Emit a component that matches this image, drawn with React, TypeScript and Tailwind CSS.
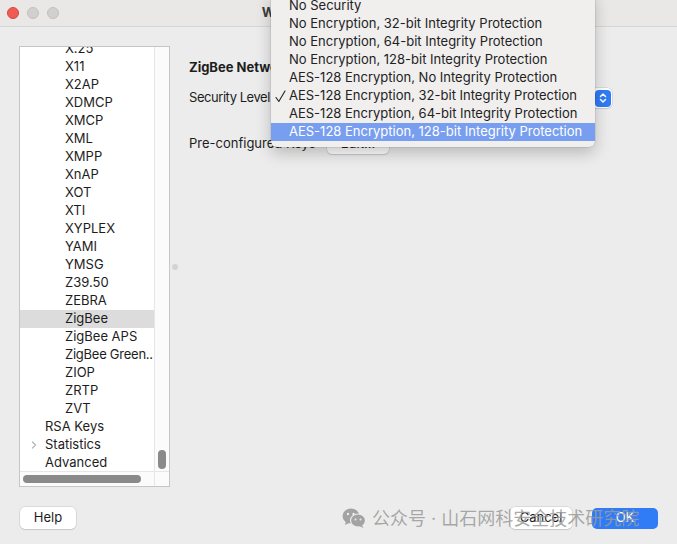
import React from "react";

const items: { t: string; lvl: number; sel?: boolean; chev?: boolean }[] = [
  { t: "X.25", lvl: 2 },
  { t: "X11", lvl: 2 },
  { t: "X2AP", lvl: 2 },
  { t: "XDMCP", lvl: 2 },
  { t: "XMCP", lvl: 2 },
  { t: "XML", lvl: 2 },
  { t: "XMPP", lvl: 2 },
  { t: "XnAP", lvl: 2 },
  { t: "XOT", lvl: 2 },
  { t: "XTI", lvl: 2 },
  { t: "XYPLEX", lvl: 2 },
  { t: "YAMI", lvl: 2 },
  { t: "YMSG", lvl: 2 },
  { t: "Z39.50", lvl: 2 },
  { t: "ZEBRA", lvl: 2 },
  { t: "ZigBee", lvl: 2, sel: true },
  { t: "ZigBee APS", lvl: 2 },
  { t: "ZigBee Green..", lvl: 2 },
  { t: "ZIOP", lvl: 2 },
  { t: "ZRTP", lvl: 2 },
  { t: "ZVT", lvl: 2 },
  { t: "RSA Keys", lvl: 1 },
  { t: "Statistics", lvl: 1, chev: true },
  { t: "Advanced", lvl: 1 },
];

const menu = [
  "No Security",
  "No Encryption, 32-bit Integrity Protection",
  "No Encryption, 64-bit Integrity Protection",
  "No Encryption, 128-bit Integrity Protection",
  "AES-128 Encryption, No Integrity Protection",
  "AES-128 Encryption, 32-bit Integrity Protection",
  "AES-128 Encryption, 64-bit Integrity Protection",
  "AES-128 Encryption, 128-bit Integrity Protection",
];

export default function App() {
  return (
    <div
      className="relative w-[677px] h-[544px] overflow-hidden bg-[#ececec] text-[13px] text-[#1d1d1d]"
      style={{ fontFamily: "Inter, 'Noto Sans CJK SC', sans-serif" }}
    >
      {/* Title bar */}
      <div className="relative h-[27px] border-b border-[#d6d6d6] bg-[#e9e8e7] flex items-center pl-[7px] gap-[8px]">
        <div className="w-[12px] h-[12px] rounded-full bg-[#ee5c55] border border-[#d8473f]" />
        <div className="w-[12px] h-[12px] rounded-full bg-[#d1d0cf] border border-[#c2c1c0]" />
        <div className="w-[12px] h-[12px] rounded-full bg-[#d1d0cf] border border-[#c2c1c0]" />
        <div className="absolute inset-0 flex items-center justify-center font-bold text-[13px] text-[#3a3a3a]">
          Wireshark · Preferences
        </div>
      </div>

      {/* Body */}
      <div className="flex pt-[19px] pl-[19px]">
        {/* Tree box */}
        <div className="relative w-[151px] h-[441px] bg-white border border-[#c6c6c6] flex flex-col">
          <div className="flex flex-1 min-h-0">
            <div className="flex-1 overflow-hidden">
              <div className="-mt-[7px]">
                {items.map((it) => (
                  <div
                    key={it.t}
                    className={`relative h-[18px] flex items-center whitespace-nowrap ${
                      it.sel ? "bg-[#dcdcdc]" : ""
                    } ${it.lvl === 2 ? "pl-[45px]" : "pl-[25px]"} ${
                      it.t === "ZigBee Green.." ? "tracking-[-0.25px]" : ""
                    }`}
                  >
                    {it.chev && (
                      <svg className="absolute left-[11px] top-[5px]" width="6" height="8" viewBox="0 0 6 8" fill="none" stroke="#b5b5b5" strokeWidth="1.2" strokeLinecap="round" strokeLinejoin="round">
                        <path d="M1.5 1 L4.5 4 L1.5 7" />
                      </svg>
                    )}
                    {it.t}
                  </div>
                ))}
              </div>
            </div>
            <div className="relative w-[15px] border-l border-[#e6e6e6] bg-[#fbfbfb]">
              <div className="absolute left-[3px] bottom-[2px] w-[8px] h-[19px] rounded-full bg-[#8a8a8a]" />
            </div>
          </div>
          <div className="flex h-[15px] border-t border-[#e6e6e6] bg-[#fbfbfb]">
            <div className="flex-1 flex items-center pl-[3px]">
              <div className="w-[118px] h-[8px] rounded-full bg-[#8a8a8a]" />
            </div>
            <div className="w-[15px] border-l border-[#e6e6e6]" />
          </div>
        </div>

        {/* splitter */}
        <div className="w-[19px] flex items-center pl-[2px]">
          <div className="w-[6px] h-[6px] rounded-full bg-[#d3d3d3]" />
        </div>

        {/* Right panel */}
        <div className="flex flex-col pt-[13px]">
          <div className="font-bold h-[18px] flex items-center">ZigBee Network Layer</div>
          <div className="flex items-center mt-[10px] h-[22px]">
            <span className="tracking-[-0.45px]">Security Level</span>
            <div className="ml-[6px] w-[336px] h-[20px] rounded-[5px] bg-white shadow-[0_0_0_0.5px_#c8c8c8,0_1px_1px_rgba(0,0,0,0.12)] flex items-center justify-end pr-[1px]">
              <div className="w-[16px] h-[17px] rounded-[4px] bg-[#2f7cf6] flex items-center justify-center">
                <svg width="8" height="12" viewBox="0 0 8 12" fill="none" stroke="white" strokeWidth="1.5" strokeLinecap="round" strokeLinejoin="round">
                  <path d="M1.5 4.5 L4 2 L6.5 4.5" />
                  <path d="M1.5 7.5 L4 10 L6.5 7.5" />
                </svg>
              </div>
            </div>
          </div>
          <div className="flex items-center mt-[25px] h-[20px]">
            <span className="w-[138px]">Pre-configured Keys</span>
            <div className="w-[62px] h-[20px] rounded-[5px] bg-white shadow-[0_0_0_0.5px_#c8c8c8,0_1px_1px_rgba(0,0,0,0.15)] flex items-center justify-center">
              Edit...
            </div>
          </div>
        </div>
      </div>

      {/* Bottom buttons */}
      <div className="absolute left-[20px] right-[19px] top-[507px] flex items-center">
        <div className="w-[56px] h-[22px] rounded-[5px] bg-white shadow-[0_0_0_0.5px_#c8c8c8,0_1px_1px_rgba(0,0,0,0.15)] flex items-center justify-center">
          Help
        </div>
        <div className="flex-1" />
        <div className="w-[62px] h-[22px] rounded-[5px] bg-white shadow-[0_0_0_0.5px_#c8c8c8,0_1px_1px_rgba(0,0,0,0.15)] flex items-center justify-center">
          Cancel
        </div>
        <div className="ml-[20px] w-[66px] h-[21px] rounded-[5px] bg-[#2f7cf6] text-white flex items-center justify-center">
          OK
        </div>
      </div>

      {/* Watermark */}
      <div className="absolute left-[342px] top-[505px] h-[26px] flex items-center gap-[6px] text-[18px] text-[#9a9a9a]/85 pointer-events-none whitespace-nowrap">
        <svg width="24" height="22" viewBox="0 0 24 22">
          <ellipse cx="9" cy="9" rx="8.5" ry="7.5" fill="#a3a3a3" />
          <path d="M4 14 L3 18 L8 15.5 Z" fill="#a3a3a3" />
          <ellipse cx="16" cy="13.5" rx="7.5" ry="6.5" fill="#a3a3a3" stroke="#ececec" strokeWidth="1.2" />
          <path d="M20 18 L21.5 21 L17 19 Z" fill="#a3a3a3" />
          <circle cx="6" cy="7" r="1.2" fill="#ececec" />
          <circle cx="11.5" cy="7" r="1.2" fill="#ececec" />
          <circle cx="13.5" cy="12.5" r="1" fill="#ececec" />
          <circle cx="18.5" cy="12.5" r="1" fill="#ececec" />
        </svg>
        <span>公众号 · 山石网科安全技术研究院</span>
      </div>

      {/* Popup menu */}
      <div className="absolute left-[271px] top-[-8px] w-[324px] pt-[5px] pb-[6px] rounded-[6px] bg-[#f0efee] shadow-[0_0_0_0.5px_rgba(0,0,0,0.15),0_6px_16px_rgba(0,0,0,0.22)]">
        {menu.map((m, i) => (
          <div
            key={m}
            className={`relative h-[18px] flex items-center pl-[18px] whitespace-nowrap ${
              i === 7 ? "bg-[#789ef0] text-white" : "text-[#222]"
            }`}
          >
            {i === 5 && (
              <svg className="absolute left-[4px] top-[3px]" width="11" height="13" viewBox="0 0 11 13" fill="none" stroke="#222" strokeWidth="1.1" strokeLinecap="round" strokeLinejoin="round">
                <path d="M1 7.5 L3.8 11.5 L10 1" />
              </svg>
            )}
            {m}
          </div>
        ))}
      </div>
    </div>
  );
}
